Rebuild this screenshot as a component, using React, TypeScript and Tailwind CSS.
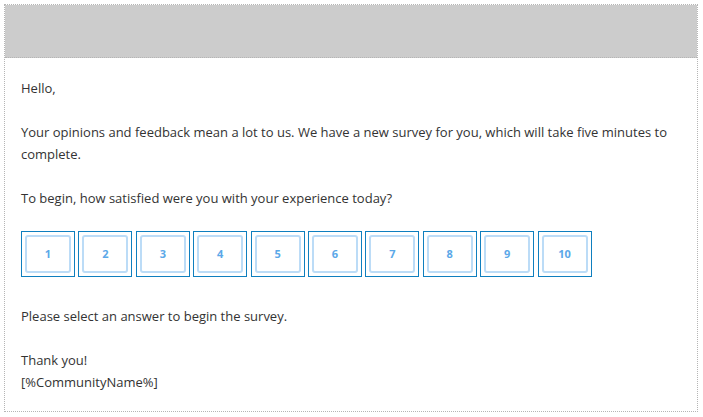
import React from "react";

const SCORES = [1, 2, 3, 4, 5, 6, 7, 8, 9, 10];

const ScoreButton = ({ n }: { n: number }) => (
  <div className="w-[54px] h-[46px] border border-[#0f7fbf] p-[3px] bg-white">
    <div className="w-full h-full rounded-[3px] border-2 border-[#bcdcf7] flex items-center justify-center text-[11px] font-bold text-[#5ba8e8]">
      {n}
    </div>
  </div>
);

const App = () => {
  return (
    <div className="w-[703px] h-[417px] bg-white pt-[4px] pl-[4px] font-['Open_Sans',sans-serif] text-[13px] leading-[22px] text-[#333333]">
      <div className="w-[694px] h-[408px] border border-dotted border-[#b5b5b5] flex flex-col">
        <div className="h-[53px] bg-[#cccccc] border-b border-dotted border-[#b5b5b5]"></div>
        <div className="pt-[19px] px-[16px]">
          <p>Hello,</p>
          <p className="mt-[22px]">
            Your opinions and feedback mean a lot to us. We have a new survey
            for you, which will take five minutes to complete.
          </p>
          <p className="mt-[22px]">
            To begin, how satisfied were you with your experience today?
          </p>
          <div className="mt-[22px] flex gap-[3.4px]">
            {SCORES.map((n) => (
              <ScoreButton key={n} n={n} />
            ))}
          </div>
          <p className="mt-[28px]">Please select an answer to begin the survey.</p>
          <p className="mt-[22px]">Thank you!</p>
          <p>[%CommunityName%]</p>
        </div>
      </div>
    </div>
  );
};

export default App;
